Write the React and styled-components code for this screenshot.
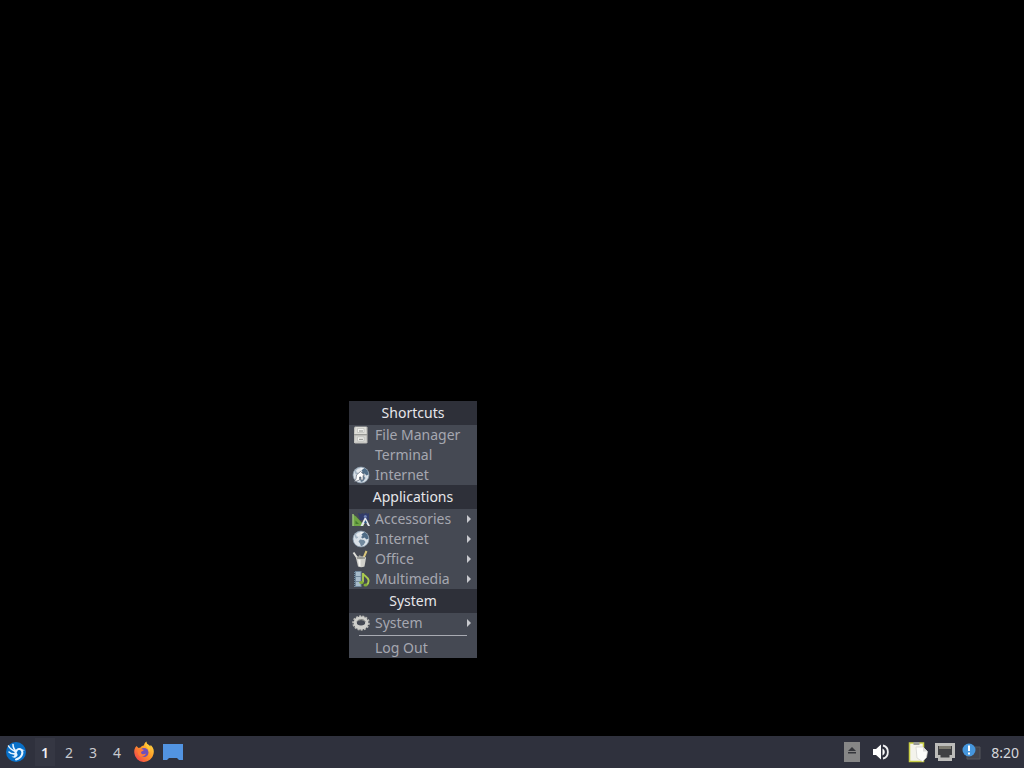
import React from "react"
import styled, { createGlobalStyle } from "styled-components"

const GlobalStyle = createGlobalStyle`
  body {
    margin: 0;
    background: #000;
    font-family: "Noto Sans", "Open Sans", sans-serif;
  }
`

const Desktop = styled.div`
  display: flex;
  flex-direction: column;
  min-height: 100vh;
  background: #000;
`

const Workspace = styled.main`
  position: relative;
  flex: 1;
`

const Menu = styled.div`
  position: absolute;
  left: 349px;
  top: 401px;
  width: 128px;
  background: #454953;
`

const MenuTitle = styled.div`
  height: 24px;
  background: #2e3039;
  color: #e6e6ea;
  font-size: 14px;
  line-height: 24px;
  text-align: center;
`

const MenuItem = styled.button`
  display: flex;
  align-items: center;
  gap: 5px;
  width: 100%;
  height: 20px;
  padding: 0 5px 0 3px;
  border: 0;
  background: transparent;
  color: #a5a7b0;
  font: inherit;
  font-size: 14px;
  line-height: 20px;
  text-align: left;
  white-space: nowrap;
`

const ItemIcon = styled.span`
  display: flex;
  flex: none;
  width: 18px;
  height: 18px;
`

const ItemLabel = styled.span`
  flex: 1;
`

const Separator = styled.hr`
  height: 1px;
  margin: 2px 10px;
  border: 0;
  background: #a9abb3;
`

const Taskbar = styled.footer`
  display: flex;
  justify-content: space-between;
  align-items: center;
  height: 32px;
  padding: 0 5px;
  background: #2f313d;
`

const Group = styled.div`
  display: flex;
  align-items: center;
  gap: ${props => props.$gap || 0}px;
`

const Pager = styled.div`
  display: flex;
  gap: 4px;
  margin: 0 6px 0 8px;
`

const PagerButton = styled.button`
  width: 20px;
  height: 28px;
  padding: 0;
  border: 0;
  background: ${props => (props.$active ? "#353743" : "transparent")};
  color: ${props => (props.$active ? "#f0f0f3" : "#c9cad0")};
  font: inherit;
  font-size: 14px;
  font-weight: ${props => (props.$active ? 600 : 400)};
`

const BarButton = styled.button`
  display: flex;
  padding: 0;
  border: 0;
  background: transparent;
`

const Tray = styled.div`
  display: flex;
  align-items: center;
  gap: 7px;
  margin-left: 18px;
`

const Clock = styled.time`
  margin-left: 9px;
  color: #d6d7dc;
  font-size: 14px;
`

const CabinetIcon = () => (
  <svg width="18" height="18" viewBox="0 0 18 18">
    <path d="M3 .5h11.500l1 1v15l-1 1H3l-1-1v-15z" fill="#bdbdb9" />
    <path d="M3.500 1h10.500l.5 7h-12z" fill="#deded9" />
    <path d="M3.500 9.500h10.500l.5 7h-12z" fill="#d3d3cf" />
    <path d="M2 8.700h13.500" stroke="#868884" strokeWidth=".8" />
    <path d="M5.500 2.500h6.500v4H5.500zM5.500 11h6.500v4H5.500z" fill="#f2f2ef" stroke="#b4b5b1" strokeWidth=".6" />
    <path d="M7 5h4M7 13.300h4" stroke="#8a8d89" />
  </svg>
)

const GlobeIcon = ({ pointer }) => (
  <svg width="18" height="18" viewBox="0 0 18 18">
    <circle cx="9" cy="9" r="8" fill="#d9e0e7" stroke="#8497a8" strokeWidth=".7" />
    <path d="M2.500 6C3 4 5 2 7 1.800l2 1-1 2-2 1v2l-2 1z" fill="#a3b3c2" />
    <path d="M9.500 4l3-2 3 2.500 1 4-2 1-2-2-2 1-1.500-1.500 1.500-1z" fill="#506c86" />
    <path d="M8 9.500l4 .5 1.500 2-2 3-2.500 1.500-1-3-1.500-2z" fill="#72899e" />
    <path d="M4 4.500c2-3 6-3 8-2L8 5 5 7z" fill="#fff" opacity=".7" />
    {pointer && (
      <path d="M4.500 9l4-3.500 4 3.500-1.500.5V14H9v-3H7.500v3L2 16l2-3z" fill="#fff" stroke="#4b5260" strokeWidth=".6" />
    )}
  </svg>
)

const AccessoriesIcon = () => (
  <svg width="18" height="18" viewBox="0 0 18 18">
    <path d="M6 3l3 1 1.500-1L12 4l2-1.500L15 4l2-1v7H8z" fill="#323c69" />
    <path d="M.5 4L4 6.500 12 15v1H.5z" fill="#6fa545" />
    <path d="M1 4v12" stroke="#a3c984" strokeWidth="1.200" />
    <path d="M3.500 10.500L7 14H3.500z" fill="#44782f" />
    <path d="M12.500 8l-4 8h2.300l2-3h1.500l1.700 3h2l-4-8z" fill="#e3e8ed" />
    <path d="M13.500 10l1.500 3h-3z" fill="#315c88" />
    <circle cx="13.300" cy="6.500" r="1.500" fill="#6f82b4" />
  </svg>
)

const OfficeIcon = () => (
  <svg width="18" height="18" viewBox="0 0 18 18">
    <path d="M1.500 2.500L6 9" stroke="#deded9" strokeWidth="2" />
    <path d="M14.500 1L11 9" stroke="#d8c57a" strokeWidth="2" />
    <path d="M7.500 5l1 4" stroke="#858984" strokeWidth="1.500" />
    <path d="M4 8h10l-1.500 8.500c-2 1-4.500 1-6.500 0z" fill="#cfcfca" />
    <path d="M6 9h2.500v7.500L7 16z" fill="#f3f3f0" />
    <ellipse cx="9" cy="8" rx="5" ry="1.300" fill="#858783" stroke="#e5e5e1" strokeWidth=".6" />
  </svg>
)

const MultimediaIcon = () => (
  <svg width="18" height="18" viewBox="0 0 18 18">
    <path d="M2 1h7.500v16H2z" fill="#71889b" />
    <path d="M2.500 1v16" stroke="#3b4655" strokeWidth="1" strokeDasharray="1 1" />
    <path d="M4 2h4.500v4H4zM4 7h4.500v4H4zM4 12h4.500v4H4z" fill="#a9bdcb" />
    <path d="M11 3v9M11 3.500c1 2.500 5 3.500 5.500 6.500.3 2-.5 4-2 5" fill="none" stroke="#a9c94e" strokeWidth="1.900" />
    <ellipse cx="9.500" cy="12.500" rx="2.200" ry="1.600" fill="#83ad38" />
    <ellipse cx="13.500" cy="15" rx="2" ry="1.500" fill="#83ad38" />
  </svg>
)

const GearIcon = () => (
  <svg width="18" height="18" viewBox="0 0 18 18">
    <ellipse cx="9" cy="9" rx="7.600" ry="6.500" fill="none" stroke="#b7b7b3" strokeWidth="2.400" strokeDasharray="1.900 1.200" />
    <path
      d="M9 2.500c4.200 0 7.300 2.700 7.300 6.500s-3.100 6.500-7.300 6.500S1.700 12.800 1.700 9 4.800 2.500 9 2.500zm0 3.500C6.500 6 4.800 7 4.800 8.700S6.500 11.500 9 11.500s4.200-1.100 4.200-2.800S11.500 6 9 6z"
      fill="#cfcfcb"
      fillRule="evenodd"
    />
    <path d="M5 7.500C6 6 8 5.500 10 5.700c2 .2 3 1.300 3.200 2.300" fill="none" stroke="#777975" />
  </svg>
)

const SubmenuArrow = () => (
  <svg width="6" height="8" viewBox="0 0 6 8">
    <path d="M1 0l4 4-4 4z" fill="#c8c9ce" />
  </svg>
)

const LubuntuIcon = () => (
  <svg width="22" height="22" viewBox="0 0 22 22">
    <circle cx="11" cy="11" r="10" fill="#0870c8" />
    <path
      d="M3.500 5c1.500 3 4.500 4.500 7.500 6M8 3.500c0 3 1 5 3.500 7M4 11c2 2 4.500 2 7 1.500"
      fill="none"
      stroke="#e6f4ff"
      strokeWidth="1.600"
      strokeLinecap="round"
    />
    <path
      d="M10.500 11.500c1-3.500 4-4.500 6-2.500 2 2.500.5 8-5.500 9.500"
      fill="none"
      stroke="#e6f4ff"
      strokeWidth="2"
      strokeLinecap="round"
    />
    <path d="M16 8l4 1.200-3.500.8zM7 13l4.500-1c2 1.500 1 3.500-1 4.500-1.500.5-3 0-4-1 2 .3 3-.5 3-2z" fill="#e6f4ff" />
  </svg>
)

const FirefoxIcon = () => (
  <svg width="22" height="22" viewBox="0 0 22 22">
    <defs>
      <linearGradient id="flame" x1="1" y1="0" x2="0" y2="1">
        <stop offset="0" stopColor="#ffe64a" />
        <stop offset=".45" stopColor="#ff9a26" />
        <stop offset="1" stopColor="#ef3155" />
      </linearGradient>
    </defs>
    <path
      d="M3.500 5l2 2 2-.5C8.500 5 10 4.500 11 4.500c0-1.500 1-3 2.500-4 0 2.500 2 3.500 3.500 5l.8-1.500c3 3 3.500 6 2.700 9A9.700 9.700 0 0 1 1.300 12C1 9 1.500 7 3.500 5z"
      fill="url(#flame)"
    />
    <circle cx="11" cy="11.500" r="4.500" fill="#7250b8" />
    <path d="M4.500 9.500c2-2 4-2 6.500-.5-1 1.500-3 1-3 2.500 0 1.700 2.500 2.500 5 1-1 4-7 4.500-8 0z" fill="#ff7a35" />
    <path d="M12.500 2c-.5 4 3 4 3.500 9 2-3 1.500-5.500 0-7z" fill="#ffc936" />
  </svg>
)

const ShowDesktopIcon = () => (
  <svg width="20" height="16" viewBox="0 0 20 16">
    <path d="M0 0h20v16h-4l-2-2H6l-2 2H0z" fill="#5294e2" />
  </svg>
)

const EjectIcon = () => (
  <svg width="16" height="20" viewBox="0 0 16 20">
    <path d="M0 0h16v20H0z" fill="#868686" />
    <path d="M8 5l4 4H4zM4 10h8v1.500H4z" fill="#35363b" />
  </svg>
)

const VolumeIcon = () => (
  <svg width="18" height="16" viewBox="0 0 18 16">
    <path d="M1 5h3l5-4.500v15L4 11H1z" fill="#fff" />
    <path d="M10.500 4.500c3 1.500 3 5.500 0 7z" fill="#fff" />
    <path d="M11 1.500c6.500 1.500 6.500 11.500 0 13" fill="none" stroke="#f0f0f2" strokeWidth="1.800" />
  </svg>
)

const ClipboardIcon = () => (
  <svg width="20" height="22" viewBox="0 0 20 22">
    <path d="M1.500 2h14v18.500h-14z" fill="#f4f3ec" stroke="#c9cf45" strokeWidth="1.500" />
    <path d="M5.500 1h6v3h-6z" fill="#9a9b98" />
    <path d="M8 6h7l4.500 4.500-1 6-4 4L9 17z" fill="#fdfdfb" stroke="#d0d0cb" strokeWidth=".7" />
    <path d="M15 6v4.500h4.500" fill="#dededb" />
  </svg>
)

const NetworkIcon = () => (
  <svg width="20" height="18" viewBox="0 0 20 18">
    <path d="M0 0h20v15h-3v3H3v-3H0z" fill="#bcbcba" />
    <path d="M3 3h14v9h-2.500v2.500h-9V12H3z" fill="#3f4043" />
    <path d="M5 3v3M7 3v3M9 3v3M11 3v3M13 3v3M15 3v3" stroke="#c9c3a8" strokeWidth=".9" />
  </svg>
)

const NotifierIcon = () => (
  <svg width="20" height="20" viewBox="0 0 20 20">
    <path d="M5 5h13v12H5z" fill="#42444b" stroke="#55575d" />
    <circle cx="7" cy="8" r="6.500" fill="#4596dc" />
    <path d="M7 3.500v5.500M7 10.500v2" stroke="#fff" strokeWidth="2" />
  </svg>
)

const sections = [
  {
    title: "Shortcuts",
    items: [
      { label: "File Manager", icon: <CabinetIcon /> },
      { label: "Terminal" },
      { label: "Internet", icon: <GlobeIcon pointer /> },
    ],
  },
  {
    title: "Applications",
    items: [
      { label: "Accessories", icon: <AccessoriesIcon />, submenu: true },
      { label: "Internet", icon: <GlobeIcon />, submenu: true },
      { label: "Office", icon: <OfficeIcon />, submenu: true },
      { label: "Multimedia", icon: <MultimediaIcon />, submenu: true },
    ],
  },
  {
    title: "System",
    items: [{ label: "System", icon: <GearIcon />, submenu: true }],
  },
]

const Item = ({ label, icon, submenu }) => (
  <MenuItem type="button" role="menuitem" aria-haspopup={submenu ? "menu" : undefined}>
    <ItemIcon>{icon}</ItemIcon>
    <ItemLabel>{label}</ItemLabel>
    {submenu && <SubmenuArrow />}
  </MenuItem>
)

const App = () => {
  return (
    <Desktop>
      <GlobalStyle />
      <Workspace>
        <Menu role="menu" aria-label="Desktop menu">
          {sections.map(section => (
            <div key={section.title} role="group" aria-label={section.title}>
              <MenuTitle>{section.title}</MenuTitle>
              {section.items.map(item => (
                <Item key={item.label} {...item} />
              ))}
            </div>
          ))}
          <Separator />
          <Item label="Log Out" />
        </Menu>
      </Workspace>
      <Taskbar>
        {/* Launchers and desktops */}
        <Group>
          <BarButton type="button" aria-label="Applications menu"><LubuntuIcon /></BarButton>
          <Pager>
            {[1, 2, 3, 4].map(n => (
              <PagerButton key={n} type="button" $active={n === 1}>{n}</PagerButton>
            ))}
          </Pager>
          <Group $gap={8}>
            <BarButton type="button" aria-label="Firefox"><FirefoxIcon /></BarButton>
            <BarButton type="button" aria-label="Show desktop"><ShowDesktopIcon /></BarButton>
          </Group>
        </Group>
        {/* Status */}
        <Group>
          <Group $gap={12}>
            <BarButton type="button" aria-label="Removable media"><EjectIcon /></BarButton>
            <BarButton type="button" aria-label="Volume"><VolumeIcon /></BarButton>
          </Group>
          <Tray>
            <BarButton type="button" aria-label="Clipboard"><ClipboardIcon /></BarButton>
            <BarButton type="button" aria-label="Network"><NetworkIcon /></BarButton>
            <BarButton type="button" aria-label="Updates"><NotifierIcon /></BarButton>
          </Tray>
          <Clock>8:20</Clock>
        </Group>
      </Taskbar>
    </Desktop>
  )
}

export default App
